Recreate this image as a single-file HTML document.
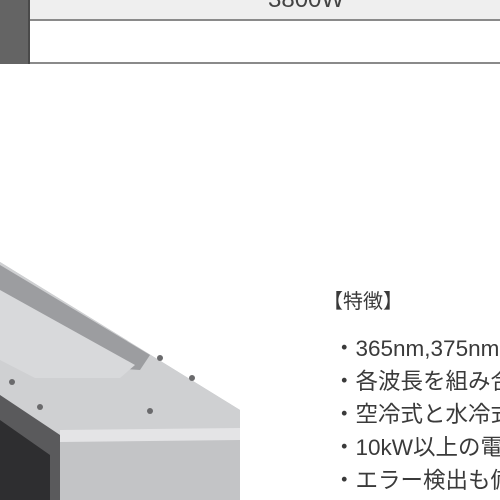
<!DOCTYPE html>
<html><head><meta charset="utf-8"><style>
body{margin:0;width:500px;height:500px;overflow:hidden;background:#fff;position:relative;font-family:"Liberation Sans","Noto Sans CJK JP",sans-serif;color:#3a3a3a}
.t{position:absolute;white-space:nowrap}
#wrap{position:absolute;left:0;top:0;width:500px;height:500px;overflow:hidden}
</style></head><body><div id="wrap">
<div style="position:absolute;left:0;top:0;width:500px;height:19px;background:#efefef"></div>
<div style="position:absolute;left:0;top:19px;width:500px;height:2px;background:#8a8a8a"></div>
<div style="position:absolute;left:0;top:62px;width:500px;height:2px;background:#8a8a8a"></div>
<div style="position:absolute;left:0;top:0;width:28px;height:64px;background:#646464"></div>
<div style="position:absolute;left:28px;top:0;width:2px;height:64px;background:#4a4a4a"></div>
<div class="t" style="left:268px;top:-14px;font-size:24px;color:#444">3800W</div>
<svg style="position:absolute;left:0;top:0" width="500" height="500">
<polygon points="0,262 240,410 240,500 60,500 0,470" fill="#b9babc"/>
<polygon points="0,262 240,410 240,435 60,435 0,395" fill="#cfd0d2"/>
<polygon points="0,265 150,355 140,370 0,360" fill="#9c9da0"/>
<polygon points="0,290 135,365 120,378 35,378 0,360" fill="#d8d9db"/>
<polygon points="0,395 60,435 60,500 0,500" fill="#5a5a5c"/>
<polygon points="0,420 50,455 50,500 0,500" fill="#2e2e30"/>
<polygon points="60,435 240,435 240,500 60,500" fill="#c3c4c6"/>
<polygon points="60,430 240,428 240,440 60,442" fill="#e4e4e6"/>
<g fill="#6a6a6c"><circle cx="12" cy="382" r="3"/><circle cx="40" cy="407" r="3"/><circle cx="150" cy="411" r="3"/><circle cx="192" cy="378" r="3"/><circle cx="160" cy="358" r="3"/></g>
</svg>
<div class="t" style="left:323px;top:285px;font-size:20px">【特徴】</div>
<div class="t" style="left:333px;top:332px;font-size:22.5px;line-height:33px">・365nm,375nm<br>・各波長を組み合わせ<br>・空冷式と水冷式<br>・10kW以上の電源<br>・エラー検出も備え</div>
</div></body></html>
